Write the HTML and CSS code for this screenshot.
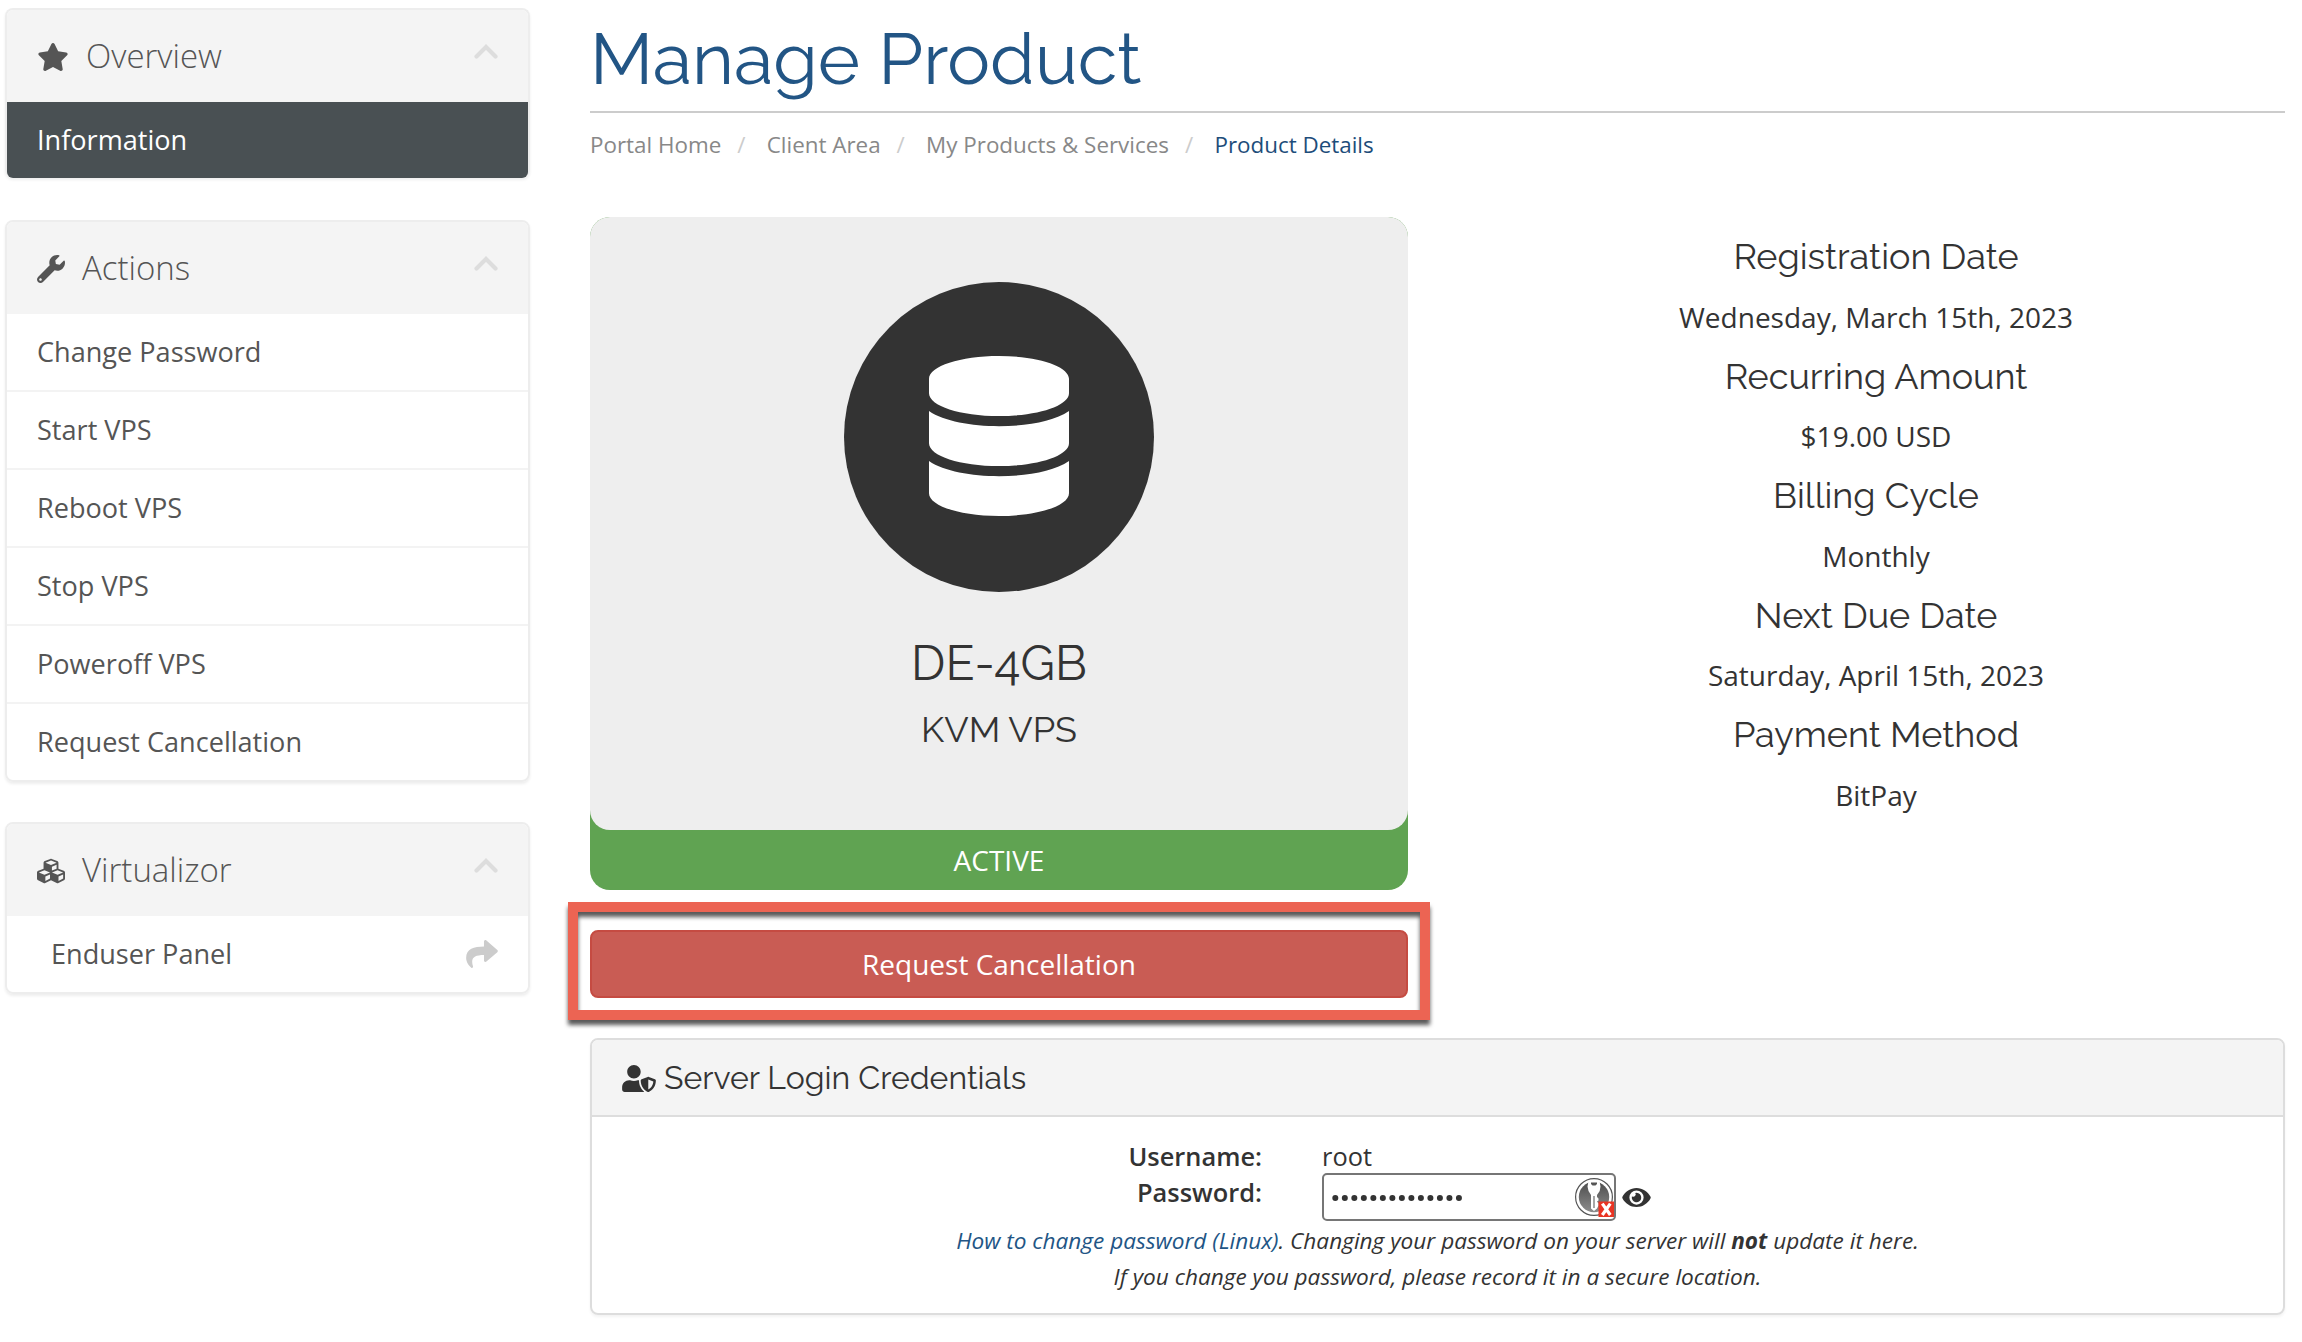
FILE: index.html
```
<!DOCTYPE html>
<html lang="en">
<head>
<meta charset="utf-8">
<title>Manage Product</title>
<link rel="stylesheet" href="styles.css">
</head>
<body>
<div class="page">
  <aside class="sidebar">
    <section class="panel">
      <h2 class="panel-head">
        <svg class="icon icon-star" viewBox="20 0 536 512"><path d="M259.3 17.8L194 150.2 47.9 171.5c-26.2 3.8-36.7 36.1-17.7 54.6l105.7 103-25 145.5c-4.5 26.3 23.2 46 46.4 33.7L288 439.6l130.7 68.7c23.2 12.2 50.9-7.4 46.4-33.7l-25-145.5 105.7-103c19-18.5 8.5-50.8-17.7-54.6L382 150.2 316.7 17.8c-11.7-23.6-45.6-23.9-57.4 0z"/></svg>
        <span>Overview</span>
        <svg class="chevron" viewBox="0 0 24 16"><path d="M2.5 12.5 12 3l9.500 9.500"/></svg>
      </h2>
      <a class="item active">Information</a>
    </section>
    <section class="panel">
      <h2 class="panel-head">
        <svg class="icon icon-wrench" viewBox="0 0 512 512"><path d="M507.730 109.100c-2.240-9.030-13.540-12.090-20.120-5.510l-74.360 74.360-67.880-11.310-11.310-67.880 74.360-74.360c6.620-6.620 3.430-17.900-5.660-20.160-47.380-11.740-99.550.91-136.580 37.930-39.640 39.640-50.550 97.100-34.050 147.200L18.740 402.760c-24.990 24.990-24.990 65.510 0 90.500 24.990 24.990 65.510 24.990 90.500 0l213.210-213.210c50.120 16.710 107.470 5.680 147.370-34.220 37.070-37.070 49.700-89.320 37.910-136.730zM64 472c-13.250 0-24-10.750-24-24 0-13.260 10.750-24 24-24s24 10.740 24 24c0 13.250-10.750 24-24 24z"/></svg>
        <span>Actions</span>
        <svg class="chevron" viewBox="0 0 24 16"><path d="M2.500 12.500 12 3l9.500 9.500"/></svg>
      </h2>
      <a class="item">Change Password</a>
      <a class="item">Start VPS</a>
      <a class="item">Reboot VPS</a>
      <a class="item">Stop VPS</a>
      <a class="item">Poweroff VPS</a>
      <a class="item">Request Cancellation</a>
    </section>
    <section class="panel">
      <h2 class="panel-head">
        <svg class="icon icon-cubes" viewBox="0 0 512 512"><path d="M488.600 250.200L392 214V105.500c0-15-9.300-28.400-23.400-33.700l-100-37.500c-8.100-3.100-17.100-3.100-25.300 0l-100 37.500c-14.100 5.300-23.400 18.700-23.400 33.700V214l-96.600 36.200C9.300 255.500 0 268.900 0 283.900V394c0 13.600 7.700 26.100 19.900 32.200l100 50c10.100 5.100 22.100 5.100 32.200 0l103.900-52 103.900 52c10.100 5.100 22.100 5.100 32.200 0l100-50c12.200-6.100 19.900-18.600 19.900-32.200V283.900c0-15-9.300-28.400-23.400-33.700zM358 214.800l-85 31.900v-68.200l85-37v73.300zM154 104.100l102-38.200 102 38.200v.6l-102 41.400-102-41.400v-.6zm84 291.100l-85 42.500v-79.100l85-38.800v75.400zm0-112l-102 41.400-102-41.400v-.6l102-38.200 102 38.200v.6zm240 112l-85 42.500v-79.100l85-38.800v75.400zm0-112l-102 41.400-102-41.400v-.6l102-38.200 102 38.200v.6z"/></svg>
        <span>Virtualizor</span>
        <svg class="chevron" viewBox="0 0 24 16"><path d="M2.500 12.500 12 3l9.500 9.500"/></svg>
      </h2>
      <a class="item item-link">Enduser Panel
        <svg class="share" viewBox="0 30 512 452"><path d="M503.691 189.836L327.687 37.851C312.281 24.546 288 35.347 288 56.015v80.053C127.371 137.907 0 170.100 0 322.326c0 61.441 39.581 122.309 83.333 154.132 13.653 9.931 33.111-2.533 28.077-18.631C66.066 312.814 132.917 274.316 288 272.085V360c0 20.700 24.300 31.453 39.687 18.164l176.004-152c11.071-9.562 11.086-26.753 0-36.328z"/></svg>
      </a>
    </section>
  </aside>

  <main class="main">
    <header class="title-bar"><h1>Manage Product</h1></header>
    <nav class="crumbs">
      <a>Portal Home</a><i>/</i><a>Client Area</a><i>/</i><a>My Products &amp; Services</a><i>/</i><a class="current">Product Details</a>
    </nav>

    <div class="columns">
      <div class="product">
        <div class="status">
          <div class="card">
            <div class="disc">
              <svg class="database" viewBox="0 0 448 512"><path d="M448 73.143v45.714C448 159.143 347.667 192 224 192S0 159.143 0 118.857V73.143C0 32.857 100.333 0 224 0s224 32.857 224 73.143zM448 176v102.857C448 319.143 347.667 352 224 352S0 319.143 0 278.857V176c48.125 33.143 136.208 48.572 224 48.572S399.874 209.143 448 176zm0 160v102.857C448 479.143 347.667 512 224 512S0 479.143 0 438.857V336c48.125 33.143 136.208 48.572 224 48.572S399.874 369.143 448 336z"/></svg>
            </div>
            <h3>DE-4GB</h3>
            <h4>KVM VPS</h4>
          </div>
          <div class="status-label">ACTIVE</div>
        </div>
        <div class="cancel">
          <a class="button">Request Cancellation</a>
          <div class="highlight"></div>
        </div>
      </div>
      <dl class="billing">
        <dt>Registration Date</dt><dd>Wednesday, March 15th, 2023</dd>
        <dt>Recurring Amount</dt><dd>$19.00 USD</dd>
        <dt>Billing Cycle</dt><dd>Monthly</dd>
        <dt>Next Due Date</dt><dd>Saturday, April 15th, 2023</dd>
        <dt>Payment Method</dt><dd>BitPay</dd>
      </dl>
    </div>

    <section class="credentials">
      <h2>
        <svg class="shield" viewBox="0 0 640 512"><path d="M622.300 271.100l-115.200-45c-4.100-1.600-12.600-3.700-22.200 0l-115.200 45c-10.700 4.200-17.700 14-17.700 24.900 0 111.600 68.700 188.800 132.900 213.900 9.600 3.700 18 1.600 22.200 0C558.400 489.900 640 420.500 640 296c0-10.900-7-20.700-17.700-24.900zM496 462.400V273.300l95.500 37.300c-5.600 87.100-60.900 135.400-95.500 151.800zM224 256c70.700 0 128-57.300 128-128S294.700 0 224 0 96 57.300 96 128s57.300 128 128 128zm96 40c0-2.500.8-4.800 1.100-7.200-2.500-.1-4.900-.8-7.500-.8h-16.700c-22.200 10.200-46.900 16-72.900 16s-50.600-5.800-72.900-16h-16.700C60.200 288 0 348.200 0 422.400V464c0 26.500 21.500 48 48 48h352c6.800 0 13.300-1.500 19.200-4-54-42.900-99.200-116.700-99.200-212z"/></svg>
        <span>Server Login Credentials</span>
      </h2>
      <div class="credentials-body">
        <div class="row"><b>Username:</b><span>root</span></div>
        <div class="row">
          <b>Password:</b>
          <div class="password">
            <svg class="dots" viewBox="0 0 130 8"><path d="M3.300 4h124"/></svg>
            <svg class="key" viewBox="0 0 40 40">
              <defs><linearGradient id="disc" x1="0" y1="0" x2="0" y2="1"><stop offset="0" stop-color="#4c4c4c"/><stop offset="1" stop-color="#8d8d8d"/></linearGradient></defs>
              <circle cx="20" cy="20" r="18.400" fill="#fff" stroke="#555" stroke-width="1.200"/>
              <circle cx="20" cy="20" r="15.200" fill="url(#disc)"/>
              <path fill="#fff" d="M14.500 4h11l1 5.500-.8 4.500-2.700 4v2l1.500 1.500v2l-1.500 1 1.500 2v2l-1.500 3-3 2.500-3-2.500V18l-2.500-4-1-4.500z"/>
              <path fill="#555" d="M17 5.500h6v1.500l-1.500 1.500h-3L17 7z"/>
              <path d="M20 19v12" stroke="#777" stroke-width="1.300"/>
              <path fill="#e93423" d="M24.500 24.500H40V40H24.500z"/>
              <path d="M28.300 26.700l8 11.300M36.300 26.700l-8 11.300" stroke="#fff" stroke-width="3.200"/>
            </svg>
          </div>
          <svg class="eye" viewBox="0 64 576 384"><path d="M572.520 241.400C518.290 135.590 410.930 64 288 64S57.680 135.640 3.480 241.410a32.350 32.350 0 0 0 0 29.190C57.710 376.410 165.070 448 288 448s230.320-71.640 284.520-177.410a32.350 32.350 0 0 0 0-29.190zM288 400a144 144 0 1 1 144-144 143.930 143.930 0 0 1-144 144zm0-240a95.310 95.310 0 0 0-25.310 3.790 47.850 47.850 0 0 1-66.900 66.900A95.780 95.780 0 1 0 288 160z"/></svg>
        </div>
        <p><a>How to change password (Linux)</a>. Changing your password on your server will <strong>not</strong> update it here.</p>
        <p>If you change you password, please record it in a secure location.</p>
      </div>
    </section>
  </main>
</div>
</body>
</html>
```
FILE: styles.css
```
* { box-sizing: border-box; }
body { margin: 0; background: #fff; color: #333; font-family: "Open Sans", sans-serif; font-size: 28px; overflow: hidden; }
h1, h2, h3, h4, p, dl, dd { margin: 0; font-weight: 400; }
h1, h3, h4, dt, .credentials h2 { font-family: Raleway, Lato, sans-serif; }
svg { display: block; flex: none; fill: currentColor; }

.page { display: grid; grid-template-columns: 525px 1695px; column-gap: 60px; padding-left: 5px; height: 1342px; }

/* sidebar */
.sidebar { padding-top: 8px; display: flex; flex-direction: column; gap: 40px; }
.panel { border: 2px solid #ededed; border-radius: 8px; box-shadow: 0 2px 3px rgba(0,0,0,.07); color: #555; }
.panel-head { display: flex; align-items: center; height: 92px; padding: 0 30px 0 30px; background: #f4f4f4; border-radius: 6px 6px 0 0; font-size: 33px; font-weight: 300; line-height: 90px; }
.panel-head span { flex: 1; }
.icon { height: 28px; margin-top: 2px; }
.icon-star { width: 30px; margin-left: 1px; margin-right: 18px; }
.icon-wrench, .icon-cubes { width: 28px; margin-right: 17px; }
.chevron { width: 24px; height: 16px; margin-bottom: 8px; fill: none; stroke: #ddd; stroke-width: 4.2; stroke-linecap: round; }
.item { display: flex; align-items: center; justify-content: space-between; height: 76px; padding: 0 30px 2px; font-size: 27.1px; }
.item + .item { height: 78px; border-top: 2px solid #f3f3f3; }
.item.active { background: #495053; color: #fff; border-radius: 0 0 6px 6px; }
.panel:has(.active) { border-bottom: 0; margin-bottom: 2px; }
.item-link { padding-left: 44px; }
.share { width: 32px; height: 28px; margin-top: 2px; color: #ccc; }

/* page title */
.title-bar { height: 113px; padding-top: 19px; border-bottom: 2px solid #ccc; }
h1 { font-size: 72px; line-height: 79px; color: #225585; }
.crumbs { display: flex; align-items: center; height: 104px; padding-bottom: 42px; font-size: 22.4px; color: #888; }
.crumbs i { width: 45.5px; padding-left: 16px; font-style: normal; color: #ccc; }
.crumbs .current { color: #1d4d7a; }

/* product */
.columns { display: grid; grid-template-columns: 818px 818px; justify-content: space-between; height: 821px; }
.status { background: #60a352; border-radius: 20px; color: #fff; text-align: center; }
.card { height: 613px; padding-top: 65px; background: #eee; border-radius: 20px; color: #333; }
.disc { display: grid; place-items: center; width: 310px; height: 310px; margin: 0 auto 45px; padding-bottom: 3px; border-radius: 50%; background: #333; color: #fff; }
.database { width: 140px; height: 160px; }
h3 { font-size: 48px; line-height: 53px; margin-bottom: 19px; }
h4 { font-size: 36px; line-height: 40px; }
.status-label { height: 60px; line-height: 60px; }
.cancel { position: relative; margin-top: 40px; }
.button { display: block; height: 68px; line-height: 64px; border: 2px solid #c54b42; border-radius: 8px; background: #c95c54; color: #fff; text-align: center; }
.highlight { position: absolute; left: -22px; top: -28px; width: 862px; height: 118px; border: 10px solid #ec6453; filter: drop-shadow(0 5px 2px rgba(0,0,0,.65)); }

.billing { padding-top: 20px; text-align: center; }
dt { font-size: 36px; line-height: 39.6px; margin-bottom: 20px; }
dd { line-height: 40px; margin-bottom: 20px; }

/* credentials */
.credentials { height: 277px; border: 2px solid #ddd; border-radius: 8px; box-shadow: 0 2px 3px rgba(0,0,0,.05); }
.credentials h2 { display: flex; align-items: center; gap: 8px; height: 77px; padding-left: 30px; border-bottom: 2px solid #ddd; border-radius: 6px 6px 0 0; background: #f4f4f4; font-size: 32px; }
.shield { width: 34px; height: 27px; margin-top: 2px; }
.credentials-body { padding-top: 21px; font-size: 25.4px; line-height: 36px; }
.row { display: flex; }
.row b { width: 670px; margin-right: 60px; font-weight: 600; text-align: right; }
.password { display: flex; align-items: center; justify-content: space-between; width: 294px; height: 48px; margin-top: -1px; margin-bottom: 2px; padding: 0 0 0 8px; border: 2px solid #767676; border-radius: 5px; }
.dots { width: 130px; height: 8px; margin-top: 1px; fill: none; stroke: #333; stroke-width: 6; stroke-linecap: round; stroke-dasharray: .01 9.5; }
.key { width: 40px; height: 40px; }
.eye { width: 29px; height: 19px; margin: 14px 0 0 6px; }
.credentials p { font-size: 22.6px; font-style: italic; text-align: center; }
.credentials p a { color: #225585; }
.credentials strong { font-weight: 700; }
```
